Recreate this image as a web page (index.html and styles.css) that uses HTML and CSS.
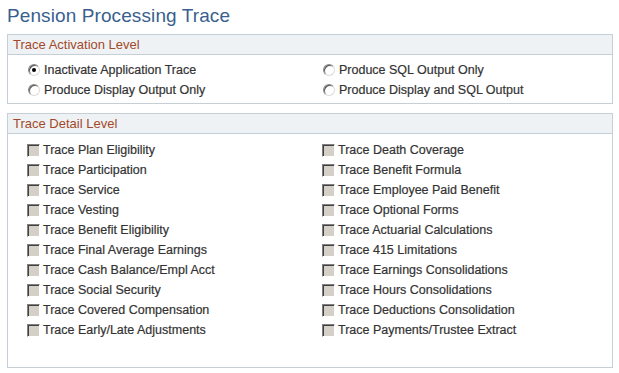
FILE: index.html
```html
<!DOCTYPE html>
<html lang="en">
<head>
    <meta charset="UTF-8">
    <title>Pension Processing Trace</title>
    <link rel="stylesheet" href="styles.css">
</head>
<body>
    <h1 class="page-title">Pension Processing Trace</h1>

    <div class="group-box">
        <div class="group-header">Trace Activation Level</div>
        <div class="group-body radio-body">
            <label class="option"><span class="radio checked"></span>Inactivate Application Trace</label>
            <label class="option"><span class="radio"></span>Produce SQL Output Only</label>
            <label class="option"><span class="radio"></span>Produce Display Output Only</label>
            <label class="option"><span class="radio"></span>Produce Display and SQL Output</label>
        </div>
    </div>

    <div class="group-box">
        <div class="group-header">Trace Detail Level</div>
        <div class="group-body check-body">
            <label class="option"><span class="check"></span>Trace Plan Eligibility</label>
            <label class="option"><span class="check"></span>Trace Death Coverage</label>
            <label class="option"><span class="check"></span>Trace Participation</label>
            <label class="option"><span class="check"></span>Trace Benefit Formula</label>
            <label class="option"><span class="check"></span>Trace Service</label>
            <label class="option"><span class="check"></span>Trace Employee Paid Benefit</label>
            <label class="option"><span class="check"></span>Trace Vesting</label>
            <label class="option"><span class="check"></span>Trace Optional Forms</label>
            <label class="option"><span class="check"></span>Trace Benefit Eligibility</label>
            <label class="option"><span class="check"></span>Trace Actuarial Calculations</label>
            <label class="option"><span class="check"></span>Trace Final Average Earnings</label>
            <label class="option"><span class="check"></span>Trace 415 Limitations</label>
            <label class="option"><span class="check"></span>Trace Cash Balance/Empl Acct</label>
            <label class="option"><span class="check"></span>Trace Earnings Consolidations</label>
            <label class="option"><span class="check"></span>Trace Social Security</label>
            <label class="option"><span class="check"></span>Trace Hours Consolidations</label>
            <label class="option"><span class="check"></span>Trace Covered Compensation</label>
            <label class="option"><span class="check"></span>Trace Deductions Consolidation</label>
            <label class="option"><span class="check"></span>Trace Early/Late Adjustments</label>
            <label class="option"><span class="check"></span>Trace Payments/Trustee Extract</label>
        </div>
    </div>
</body>
</html>
```

FILE: styles.css
```css
body {
    margin: 0;
    padding: 0 7px;
    font-family: "Liberation Sans", Arial, sans-serif;
    background-color: #fff;
    color: #333;
}

.page-title {
    margin: 0;
    padding: 5px 0 0 0;
    height: 29px;
    font-size: 19px;
    font-weight: normal;
    color: #3a5f8e;
    letter-spacing: 0.1px;
}

.group-box {
    width: 604px;
    border: 1px solid #c6ced6;
    margin-bottom: 9px;
}

.group-header {
    height: 19px;
    line-height: 19px;
    padding-left: 5px;
    background-color: #eef2f5;
    border-bottom: 1px solid #c6ced6;
    color: #a3492a;
    font-size: 13px;
}

.group-body {
    display: grid;
    grid-template-columns: 295px 1fr;
    padding-left: 19px;
}

.radio-body {
    padding-top: 5px;
    padding-bottom: 3px;
}

.check-body {
    padding-top: 6px;
    padding-bottom: 27px;
}

.option {
    display: flex;
    align-items: center;
    height: 20px;
    font-size: 12.5px;
    color: #333;
    -webkit-text-stroke: 0.2px #333;
}

.radio {
    box-sizing: border-box;
    width: 12px;
    height: 12px;
    margin: 0 4px 0 1px;
    border-radius: 50%;
    border: 1px solid;
    border-color: #8a8a8a #dcdcdc #dcdcdc #8a8a8a;
    background-color: #fff;
    box-shadow: inset 1px 1px 0 #555;
    position: relative;
}

.radio.checked::after {
    content: "";
    position: absolute;
    left: 3px;
    top: 3px;
    width: 4px;
    height: 4px;
    border-radius: 50%;
    background-color: #000;
}

.check {
    box-sizing: border-box;
    width: 13px;
    height: 13px;
    margin-right: 3px;
    border: 1px solid;
    border-color: #808080 #fff #fff #808080;
    background-color: #d4d0c8;
    box-shadow: inset 1px 1px 0 #404040, inset -1px -1px 0 #d4d0c8;
}
```
